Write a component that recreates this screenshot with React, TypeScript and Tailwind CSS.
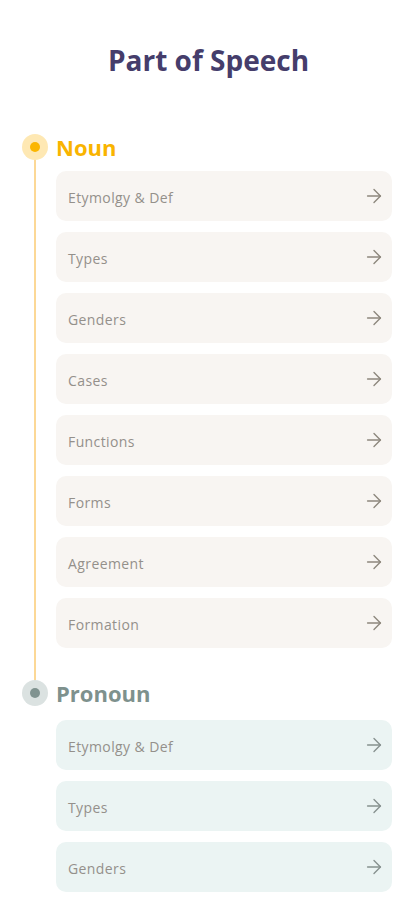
import React from 'react';
import { ArrowRight } from 'lucide-react';

type Section = {
  title: string;
  items: string[];
  tone: 'noun' | 'pronoun';
};

const sections: Section[] = [
  {
    title: 'Noun',
    tone: 'noun',
    items: ['Etymolgy & Def', 'Types', 'Genders', 'Cases', 'Functions', 'Forms', 'Agreement', 'Formation'],
  },
  {
    title: 'Pronoun',
    tone: 'pronoun',
    items: ['Etymolgy & Def', 'Types', 'Genders'],
  },
];

const App: React.FC = () => {
  return (
    <div
      className="min-h-screen bg-white overflow-hidden"
      style={{ fontFamily: '"Open Sans", Lato, sans-serif' }}
    >
      <h1 className="pt-[43px] text-center text-[28px] leading-[34px] font-bold text-[#453d6b]">
        Part of Speech
      </h1>

      <div className="relative mt-[56px]">
        {/* timeline line between the dots */}
        <div className="absolute left-[34px] top-[14px] h-[546px] w-[2px] bg-[#fcd896]" />

        {sections.map((s, i) => (
          <SectionBlock key={s.title} section={s} first={i === 0} />
        ))}
      </div>
    </div>
  );
};

const SectionBlock: React.FC<{ section: Section; first: boolean }> = ({ section, first }) => {
  const noun = section.tone === 'noun';
  return (
    <div className={first ? '' : 'mt-[31px]'}>
      <div className="relative flex h-[28px] items-center">
        <div className="flex w-[56px] pl-[22px]">
          <div
            className={`flex h-[26px] w-[26px] items-center justify-center rounded-full ${
              noun ? 'bg-[#fee8b3]' : 'bg-[#dbe2e1]'
            }`}
          >
            <div className={`h-[10px] w-[10px] rounded-full ${noun ? 'bg-[#fbb600]' : 'bg-[#809390]'}`} />
          </div>
        </div>
        <span
          className={`text-[22px] font-bold leading-none ${noun ? 'text-[#f9b400]' : 'text-[#7e918d]'}`}
        >
          {section.title}
        </span>
      </div>

      <div className={`flex flex-col gap-[11px] pl-[56px] pr-[25px] ${noun ? 'mt-[10px]' : 'mt-[13px]'}`}>
        {section.items.map((item) => (
          <div
            key={item}
            className={`flex h-[50px] items-center justify-between rounded-[10px] pl-[12px] pr-[7px] ${
              noun ? 'bg-[#f8f5f2]' : 'bg-[#ebf4f3]'
            }`}
          >
            <span className="pt-[2px] text-[14px] tracking-[0.4px] text-[#94908b]">{item}</span>
            <ArrowRight size={22} strokeWidth={1.5} className={noun ? 'text-[#8d877d]' : 'text-[#87918f]'} />
          </div>
        ))}
      </div>
    </div>
  );
};

export default App;
